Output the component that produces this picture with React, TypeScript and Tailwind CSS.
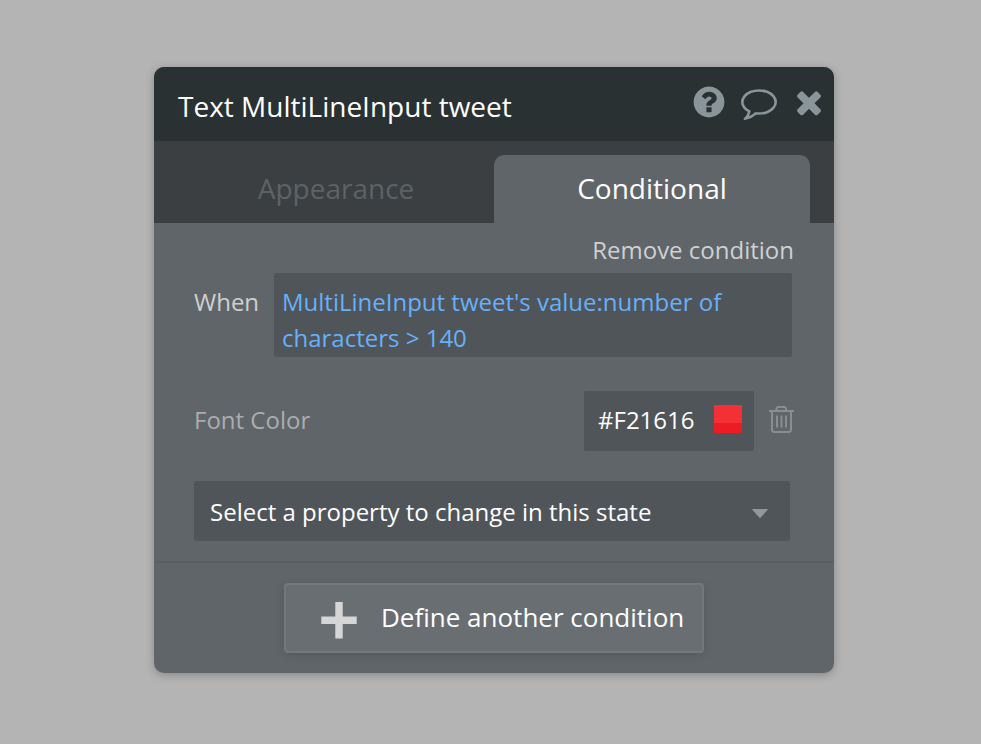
function HelpIcon() {
  return (
    <svg viewBox="0 0 1792 1792" className="size-9" fill="currentColor">
      <path d="M1024 1376v-192q0-14-9-23t-23-9h-192q-14 0-23 9t-9 23v192q0 14 9 23t23 9h192q14 0 23-9t9-23zm256-672q0-88-55.5-163t-138.5-116-170-41q-243 0-371 213-15 24 8 42l132 100q7 6 19 6 16 0 25-12 53-68 86-92 34-24 86-24 48 0 85.5 26t37.5 59q0 38-20 61t-68 45q-63 28-115.5 86.5t-52.5 125.5v36q0 14 9 23t23 9h192q14 0 23-9t9-23q0-19 21.5-49.5t54.5-49.5q32-18 49-28.5t46-35 44.5-48 28-60.5 12.5-81zm384 192q0 209-103 385.5t-279.5 279.5-385.5 103-385.5-103-279.5-279.5-103-385.5 103-385.5 279.5-279.5 385.5-103 385.5 103 279.5 279.5 103 385.5z" />
    </svg>
  );
}

function CommentIcon() {
  return (
    <svg viewBox="0 0 1792 1792" className="size-9" fill="currentColor">
      <path d="M896 384q-204 0-381.500 69.500t-282 187.500-104.500 255q0 112 71.500 213.500t201.500 175.500l87 50-27 96q-24 91-70 172 152-63 275-171l43-38 57 6q69 8 130 8 204 0 381.500-69.500t282-187.500 104.500-255-104.500-255-282-187.500-381.500-69.500zm896 512q0 174-120 321.500t-326 233-450 85.500q-70 0-145-8-198 175-460 242-49 14-114 22h-5q-15 0-27-10.500t-16-27.500v-1q-3-4-.5-12t2-10 4.500-9.500l6-9 7-8.500 8-9q7-8 31-34.500t34.500-38 31-39.500 32.500-51 27-59 26-76q-157-89-247.500-220t-90.500-281q0-174 120-321.500t326-233 450-85.500 450 85.500 326 233 120 321.500z" />
    </svg>
  );
}

function CloseIcon() {
  return (
    <svg viewBox="0 0 1792 1792" className="size-9" fill="currentColor">
      <path d="M1490 1322q0 40-28 68l-136 136q-28 28-68 28t-68-28l-294-294-294 294q-28 28-68 28t-68-28l-136-136q-28-28-28-68t28-68l294-294-294-294q-28-28-28-68t28-68l136-136q28-28 68-28t68 28l294 294 294-294q28-28 68-28t68 28l136 136q28 28 28 68t-28 68l-294 294 294 294q28 28 28 68z" />
    </svg>
  );
}

function TrashIcon() {
  return (
    <svg viewBox="0.5 0 25 28" className="h-7 w-[25px]" fill="none" stroke="currentColor" strokeWidth="2">
      <path d="M0.500 6H25.500M8 5.500V4q0-2 2-2h5.500q2 0 2 2v1.500M3.500 6v18.500q0 2.500 2.500 2.500h14q2.500 0 2.500-2.500V6" />
      <path d="M8.500 10.500v12M13 10.500v12M17.500 10.500v12" />
    </svg>
  );
}

export default function App() {
  return (
    <div className="flex h-[744px] w-[981px] items-start overflow-hidden bg-[#b4b4b4] pt-[67px] pl-[154px] font-['Open_Sans',sans-serif]">
      <section className="flex h-[606px] w-[680px] flex-col overflow-hidden rounded-[10px] bg-[#606569] shadow-[0_2px_8px_rgba(0,0,0,0.25)]">
        <header className="flex h-[74px] shrink-0 items-start justify-between bg-[#293132] pr-[7px] pl-6">
          <h1 className="mt-[19px] text-[28px] leading-10 whitespace-nowrap text-white">Text MultiLineInput tweet</h1>
          <div className="mt-[17px] flex gap-3.5 text-[#89959a]">
            <HelpIcon />
            <CommentIcon />
            <CloseIcon />
          </div>
        </header>

        <nav className="flex h-[82px] shrink-0 items-end bg-[#3b3f42] px-6 text-[28px] leading-10">
          <div className="flex h-[68px] w-[316px] justify-center pt-[13px] text-[#5d6265]">Appearance</div>
          <div className="flex h-[68px] w-[316px] justify-center rounded-t-[10px] bg-[#606569] pt-[13px] text-white">Conditional</div>
        </nav>

        <div className="flex h-[338px] shrink-0 flex-col pl-10 text-2xl">
          <div className="mt-[9px] mr-10 flex h-[41px] justify-end leading-9 text-[#cfd0d1]">Remove condition</div>
          <div className="flex items-start">
            <span className="w-20 pt-[11px] leading-9 text-[#cfd0d1]">When</span>
            <div className="h-21 w-[518px] rounded-xs bg-[#505559] px-2 pt-[11px] leading-9 text-[#67b0fa]">
              <p className="whitespace-nowrap">MultiLineInput tweet's value:number of</p>
              <p>characters &gt; 140</p>
            </div>
          </div>
          <div className="mt-[34px] flex h-15 items-center">
            <span className="w-[390px] pb-0.5 text-[#aaadaf]">Font Color</span>
            <div className="flex h-15 w-[170px] items-center justify-between rounded-xs bg-[#505559] pr-3 pl-3.5 text-white">
              <span className="pb-0.5">#F21616</span>
              <span className="mb-1 flex size-7 flex-col bg-[#f23036]">
                <span className="mt-[18px] h-2.5 bg-[#ed1c24]" />
              </span>
            </div>
            <span className="mb-1 ml-[15px] flex text-[#8a8e91]">
              <TrashIcon />
            </span>
          </div>
          <div className="mt-[30px] flex h-15 w-[596px] items-center justify-between rounded-xs bg-[#505559] pr-[22px] pl-4 text-white">
            <span className="pt-0.5">Select a property to change in this state</span>
            <svg viewBox="0 0 16 9" className="mt-1 h-[9px] w-4 text-[#92979a]" fill="currentColor">
              <path d="M1 0H15Q16.500 0 15.500 1L9 8.200Q8 9.200 7 8.200L.5 1Q-.5 0 1 0Z" />
            </svg>
          </div>
        </div>

        <footer className="flex h-28 justify-center border-t-2 border-[#5a5f62] pt-5">
          <button className="flex h-[70px] w-[420px] items-start rounded-sm border-2 border-[#73787b] bg-[#696e72] text-[26px] text-white shadow-[0_2px_8px_rgba(0,0,0,0.12)]">
            <svg viewBox="0 0 36 37" className="mt-[17px] ml-[35px] h-[37px] w-9 text-[#d6d6d6]" fill="currentColor">
              <path d="M14.300 0h7.400v14.500h14v7.400h-14v14.700h-7.400v-14.700h-14v-7.400h14z" />
            </svg>
            <span className="mt-3 ml-6 leading-10 whitespace-nowrap">Define another condition</span>
          </button>
        </footer>
      </section>
    </div>
  );
}
